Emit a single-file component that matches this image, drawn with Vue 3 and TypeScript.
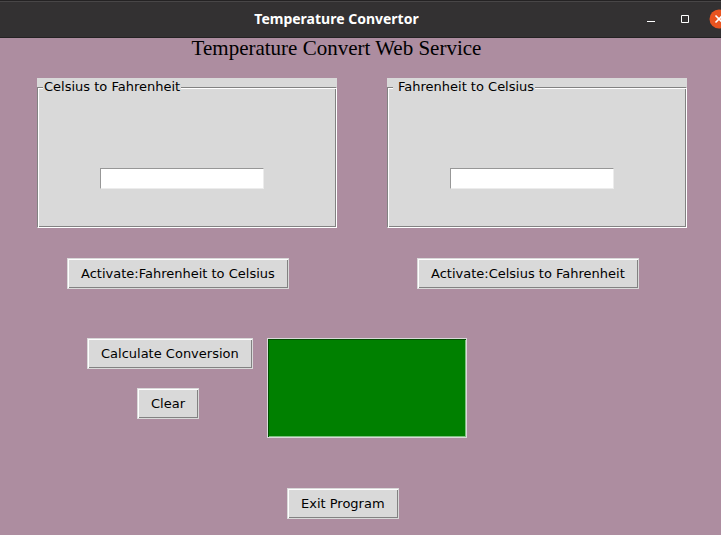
<script setup lang="ts">
import { ref } from 'vue'

type Mode = 'c2f' | 'f2c'

const celsius = ref('')
const fahrenheit = ref('')
const result = ref('')
const mode = ref<Mode | null>(null)

function calculate(): void {
  const toFahrenheit = mode.value ? mode.value === 'c2f' : celsius.value !== ''
  const source = toFahrenheit ? celsius.value : fahrenheit.value
  const value = parseFloat(source)
  if (Number.isNaN(value)) return
  result.value = (toFahrenheit ? (value * 9) / 5 + 32 : ((value - 32) * 5) / 9).toFixed(2)
}

function clear(): void {
  celsius.value = ''
  fahrenheit.value = ''
  result.value = ''
}
</script>

<template>
  <div class="window">
    <header class="titlebar">
      <span class="caption">Temperature Convertor</span>
      <div class="controls">
        <button type="button" class="control" aria-label="Minimize">
          <svg width="8" height="8" viewBox="0 0 8 8"><path d="M0 6.5h8" stroke="#fff" /></svg>
        </button>
        <button type="button" class="control" aria-label="Maximize">
          <svg width="8" height="8" viewBox="0 0 8 8"><path d="M.5 .5h7v7h-7z" fill="none" stroke="#fff" /></svg>
        </button>
        <button type="button" class="control close" aria-label="Close">
          <svg width="20" height="20" viewBox="0 0 20 20">
            <circle cx="10" cy="10" r="9.5" fill="#e95420" />
            <path d="M6.5 6.5l7 7M13.5 6.5l-7 7" stroke="#fff" stroke-width="1.6" />
          </svg>
        </button>
      </div>
    </header>

    <main class="content">
      <h1 class="heading">Temperature Convert Web Service</h1>

      <div class="columns">
        <section class="column">
          <div class="panel">
            <fieldset class="frame">
              <legend>Celsius to Fahrenheit</legend>
              <input v-model="celsius" class="entry" type="text" aria-label="Celsius to Fahrenheit" />
            </fieldset>
          </div>
          <button type="button" class="button activate" @click="mode = 'f2c'">Activate:Fahrenheit to Celsius</button>
        </section>
        <section class="column">
          <div class="panel">
            <fieldset class="frame">
              <legend class="indented">Fahrenheit to Celsius</legend>
              <input v-model="fahrenheit" class="entry" type="text" aria-label="Fahrenheit to Celsius" />
            </fieldset>
          </div>
          <button type="button" class="button activate" @click="mode = 'c2f'">Activate:Celsius to Fahrenheit</button>
        </section>
      </div>

      <div class="actions">
        <div class="commands">
          <button type="button" class="button" @click="calculate">Calculate Conversion</button>
          <button type="button" class="button clear" @click="clear">Clear</button>
        </div>
        <output class="result">{{ result }}</output>
      </div>

      <button type="button" class="button exit">Exit Program</button>
    </main>
  </div>
</template>

<style>
body {
  margin: 0;
  background: #ad8da0;
}
</style>

<style scoped>
.window {
  box-sizing: border-box;
  min-height: 100vh;
  display: flex;
  flex-direction: column;
  color: #000;
  font: 13px/18px "DejaVu Sans", sans-serif;
}

.titlebar {
  box-sizing: border-box;
  height: 38px;
  display: grid;
  grid-template-columns: 1fr auto 1fr;
  align-items: center;
  background: #333132;
  border-top: 1px solid #242223;
  border-bottom: 1px solid #242223;
  box-shadow: inset 0 1px #484647;
  overflow: hidden;
}

.caption {
  grid-column: 2;
  padding-right: 48px;
  color: #fff;
  font: bold 14px/18px "Noto Sans", sans-serif;
}

.controls {
  justify-self: end;
  display: flex;
  align-items: center;
  gap: 20px;
  margin-right: -8px;
}

.control {
  display: flex;
  padding: 0;
  border: 0;
  background: none;
}

.control + .control {
  margin-left: 6px;
}

.control.close {
  margin-left: 0;
}

.content {
  flex: 1;
  padding: 0 34px 0 37px;
  background: #ad8da0;
}

.heading {
  margin: 0 0 20px;
  padding-right: 51px;
  text-align: center;
  font: 21px/20px "Liberation Serif", serif;
}

.columns {
  display: grid;
  grid-template-columns: 1fr 1fr;
  gap: 50px;
}

.panel {
  background: #d9d9d9;
}

.frame {
  box-sizing: border-box;
  min-width: 0;
  height: 150px;
  margin: 0;
  padding: 72px 0 0 62px;
  border: 1px solid #828282;
  border-right-color: #fff;
  border-bottom-color: #fff;
  box-shadow: inset 1px 1px #fff, inset -1px -1px #828282;
}

legend {
  margin-left: -57px;
  padding: 0 1px;
  background: #d9d9d9;
}

legend.indented {
  padding-left: 5px;
}

.entry {
  box-sizing: border-box;
  display: block;
  width: 164px;
  height: 21px;
  padding: 0 2px;
  border: 1px solid #979797;
  border-right-color: #ececec;
  border-bottom-color: #ececec;
  background: #fff;
  font: inherit;
}

.button {
  padding: 6px 13px 5px;
  border: 1px solid #d9d9d9;
  border-radius: 0;
  background: #d9d9d9;
  box-shadow: inset 1px 1px #fff, inset -1px -1px #828282;
  color: #000;
  font: inherit;
  white-space: nowrap;
}

.activate {
  display: block;
  margin: 30px 0 0 30px;
}

.actions {
  display: flex;
  gap: 14px;
  margin: 49px 0 50px 50px;
}

.commands {
  display: flex;
  flex-direction: column;
  align-items: flex-start;
  gap: 19px;
}

.clear {
  margin-left: 50px;
}

.result {
  box-sizing: border-box;
  width: 200px;
  height: 100px;
  padding: 4px;
  border: 1px solid #d9d9d9;
  background: #008000;
  box-shadow: inset 1px 1px #004d00, inset -1px -1px #7fc07f;
}

.exit {
  display: block;
  margin-left: 250px;
}
</style>
